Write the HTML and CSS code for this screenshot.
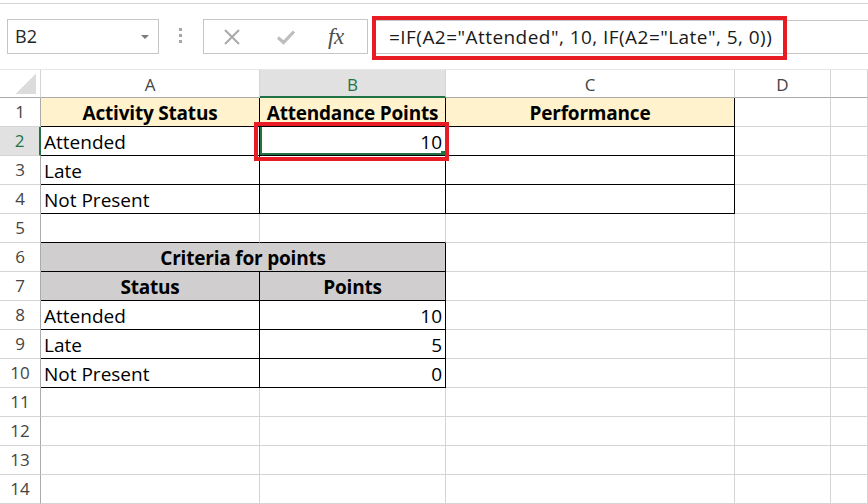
FILE: index.html
```html
<!DOCTYPE html>
<html>
<head>
<meta charset="utf-8">
<link rel="stylesheet" href="styles.css">
</head>
<body>
<div class="app">
  <div class="topline"></div>
  <div class="toolbar">
    <div class="namebox"><span class="ref">B2</span><span class="caret"></span></div>
    <div class="dots"><i></i><i></i><i></i></div>
    <div class="fxbox">
      <svg class="ic-x" width="18" height="16" viewBox="0 0 18 16"><path d="M2 1 L16 15 M16 1 L2 15" stroke="#a9a9a9" stroke-width="2" fill="none"/></svg>
      <svg class="ic-ok" width="20" height="16" viewBox="0 0 20 16"><path d="M2 8.5 L7.5 13.5 L18 2.5" stroke="#bdbdbd" stroke-width="3.2" fill="none"/></svg>
      <span class="fx">fx</span>
    </div>
    <div class="formula">
      <div class="hl"></div>
      <span class="ftext">=IF(A2="Attended", 10, IF(A2="Late", 5, 0))</span>
    </div>
  </div>
  <div class="sheet">
    <div class="corner"></div>
    <div class="ch">A</div>
    <div class="ch sel">B</div>
    <div class="ch">C</div>
    <div class="ch">D</div>
    <div class="ch"></div>

    <div class="rh">1</div>
    <div class="c b hd">Activity Status</div>
    <div class="c b hd">Attendance Points</div>
    <div class="c b hd">Performance</div>
    <div class="c"></div>
    <div class="c"></div>

    <div class="rh sel">2</div>
    <div class="c b">Attended</div>
    <div class="c b r active">10<span class="handle"></span></div>
    <div class="c b"></div>
    <div class="c"></div>
    <div class="c"></div>

    <div class="rh">3</div>
    <div class="c b">Late</div>
    <div class="c b"></div>
    <div class="c b"></div>
    <div class="c"></div>
    <div class="c"></div>

    <div class="rh">4</div>
    <div class="c b">Not Present</div>
    <div class="c b"></div>
    <div class="c b"></div>
    <div class="c"></div>
    <div class="c"></div>

    <div class="rh">5</div>
    <div class="c bb"></div>
    <div class="c bb"></div>
    <div class="c"></div>
    <div class="c"></div>
    <div class="c"></div>

    <div class="rh">6</div>
    <div class="c b gr span2">Criteria for points</div>
    <div class="c"></div>
    <div class="c"></div>
    <div class="c"></div>

    <div class="rh">7</div>
    <div class="c b gr">Status</div>
    <div class="c b gr">Points</div>
    <div class="c"></div>
    <div class="c"></div>
    <div class="c"></div>

    <div class="rh">8</div>
    <div class="c b">Attended</div>
    <div class="c b r">10</div>
    <div class="c"></div>
    <div class="c"></div>
    <div class="c"></div>

    <div class="rh">9</div>
    <div class="c b">Late</div>
    <div class="c b r">5</div>
    <div class="c"></div>
    <div class="c"></div>
    <div class="c"></div>

    <div class="rh">10</div>
    <div class="c b">Not Present</div>
    <div class="c b r">0</div>
    <div class="c"></div>
    <div class="c"></div>
    <div class="c"></div>

    <div class="rh">11</div>
    <div class="c"></div><div class="c"></div><div class="c"></div><div class="c"></div><div class="c"></div>
    <div class="rh">12</div>
    <div class="c"></div><div class="c"></div><div class="c"></div><div class="c"></div><div class="c"></div>
    <div class="rh">13</div>
    <div class="c"></div><div class="c"></div><div class="c"></div><div class="c"></div><div class="c"></div>
    <div class="rh">14</div>
    <div class="c"></div><div class="c"></div><div class="c"></div><div class="c"></div><div class="c"></div>

    <div class="cellmark"></div>
  </div>
</div>
</body>
</html>
```

FILE: styles.css
```css
* { box-sizing: border-box; }
html, body { margin: 0; padding: 0; background: #fff; }
body { width: 868px; height: 504px; overflow: hidden; font-family: "Open Sans", "Noto Sans", sans-serif; }

.topline { height: 4px; border-bottom: 1px solid #d4d4d4; }

.toolbar {
  height: 65px;
  display: flex;
  align-items: flex-start;
  padding-top: 15px;
}

.namebox {
  margin-left: 7px;
  width: 152px;
  height: 35px;
  border: 1px solid #c6c6c6;
  display: flex;
  align-items: center;
  justify-content: space-between;
  padding: 0 9px 0 7px;
}
.ref { font-size: 18px; color: #262626; line-height: 33px; }
.caret {
  width: 0; height: 0;
  border-left: 4px solid transparent;
  border-right: 4px solid transparent;
  border-top: 4px solid #7a7a7a;
  margin-top: 1px;
}

.dots {
  margin-left: 20px;
  margin-top: 9px;
  display: flex;
  flex-direction: column;
  gap: 3px;
}
.dots i { display: block; width: 3px; height: 3px; background: #a6a6a6; }

.fxbox {
  margin-left: 21px;
  width: 165px;
  height: 35px;
  border: 1px solid #c6c6c6;
  display: flex;
  align-items: center;
}
.ic-x { margin-left: 19px; }
.ic-ok { margin-left: 35px; }
.fx {
  margin-left: 32px;
  font-family: "Liberation Serif", "DejaVu Serif", serif;
  font-style: italic;
  font-size: 23px;
  color: #4d4d4d;
  line-height: 20px;
  letter-spacing: -0.5px;
}

.formula {
  position: relative;
  flex: 1;
  margin-left: 4px;
  margin-top: 1px;
  height: 34px;
  border-top: 1px solid #c6c6c6;
  border-bottom: 1px solid #c6c6c6;
  padding-left: 17px;
}
.ftext { font-size: 19px; letter-spacing: 0.45px; line-height: 32px; color: #1a1a1a; white-space: nowrap; }
.hl {
  position: absolute;
  left: 0;
  top: -5px;
  width: 415px;
  height: 44px;
  border: 4px solid #e81c24;
}

.sheet {
  position: relative;
  display: grid;
  grid-template-columns: 41px 219px 186px 289px 96px 1fr;
  grid-auto-rows: 29px;
}

.corner {
  position: relative;
  border-top: 1px solid #e6e6e6;
  border-right: 1px solid #d4d4d4;
  border-bottom: 1px solid #ababab;
}
.corner::after {
  content: "";
  position: absolute;
  right: 4px;
  bottom: 3px;
  width: 21px;
  height: 21px;
  background: linear-gradient(to bottom right, transparent 50%, #dcdcdc 50%);
}

.ch {
  border-top: 1px solid #e6e6e6;
  border-right: 1px solid #d4d4d4;
  border-bottom: 1px solid #ababab;
  text-align: center;
  font-size: 17px;
  color: #444;
  padding-top: 3px;
  line-height: 24px;
}
.ch.sel { background: #e1e1e1; border-bottom: 2px solid #217346; color: #217346; }

.rh {
  border-right: 1px solid #ababab;
  border-bottom: 1px solid #d4d4d4;
  text-align: center;
  font-size: 17px;
  color: #444;
  line-height: 28px;
}
.rh.sel { background: #e1e1e1; border-right: 2px solid #217346; color: #217346; }

.c {
  border-right: 1px solid #d4d4d4;
  border-bottom: 1px solid #d4d4d4;
  font-size: 19px;
  line-height: 26px;
  padding: 2px 3px 0;
  color: #000;
  white-space: nowrap;
  overflow: hidden;
}
.c.b { border-right-color: #000; border-bottom-color: #000; }
.c.bb { border-bottom-color: #000; }
.c.r { text-align: right; }
.c.hd { background: #fff2cc; font-weight: 700; text-align: center; letter-spacing: -0.2px; }
.c.gr { background: #d0cece; font-weight: 700; text-align: center; letter-spacing: -0.2px; }
.span2 { grid-column: span 2; }

.active { position: relative; box-shadow: inset 2px 0 0 #217346, inset 0 -2px 0 #217346; }
.handle {
  position: absolute;
  right: 0;
  bottom: 0;
  width: 4px;
  height: 4px;
  background: #217346;
}

.cellmark {
  position: absolute;
  left: 254px;
  top: 53px;
  width: 195px;
  height: 39px;
  border: 4px solid #e81c24;
}
```
